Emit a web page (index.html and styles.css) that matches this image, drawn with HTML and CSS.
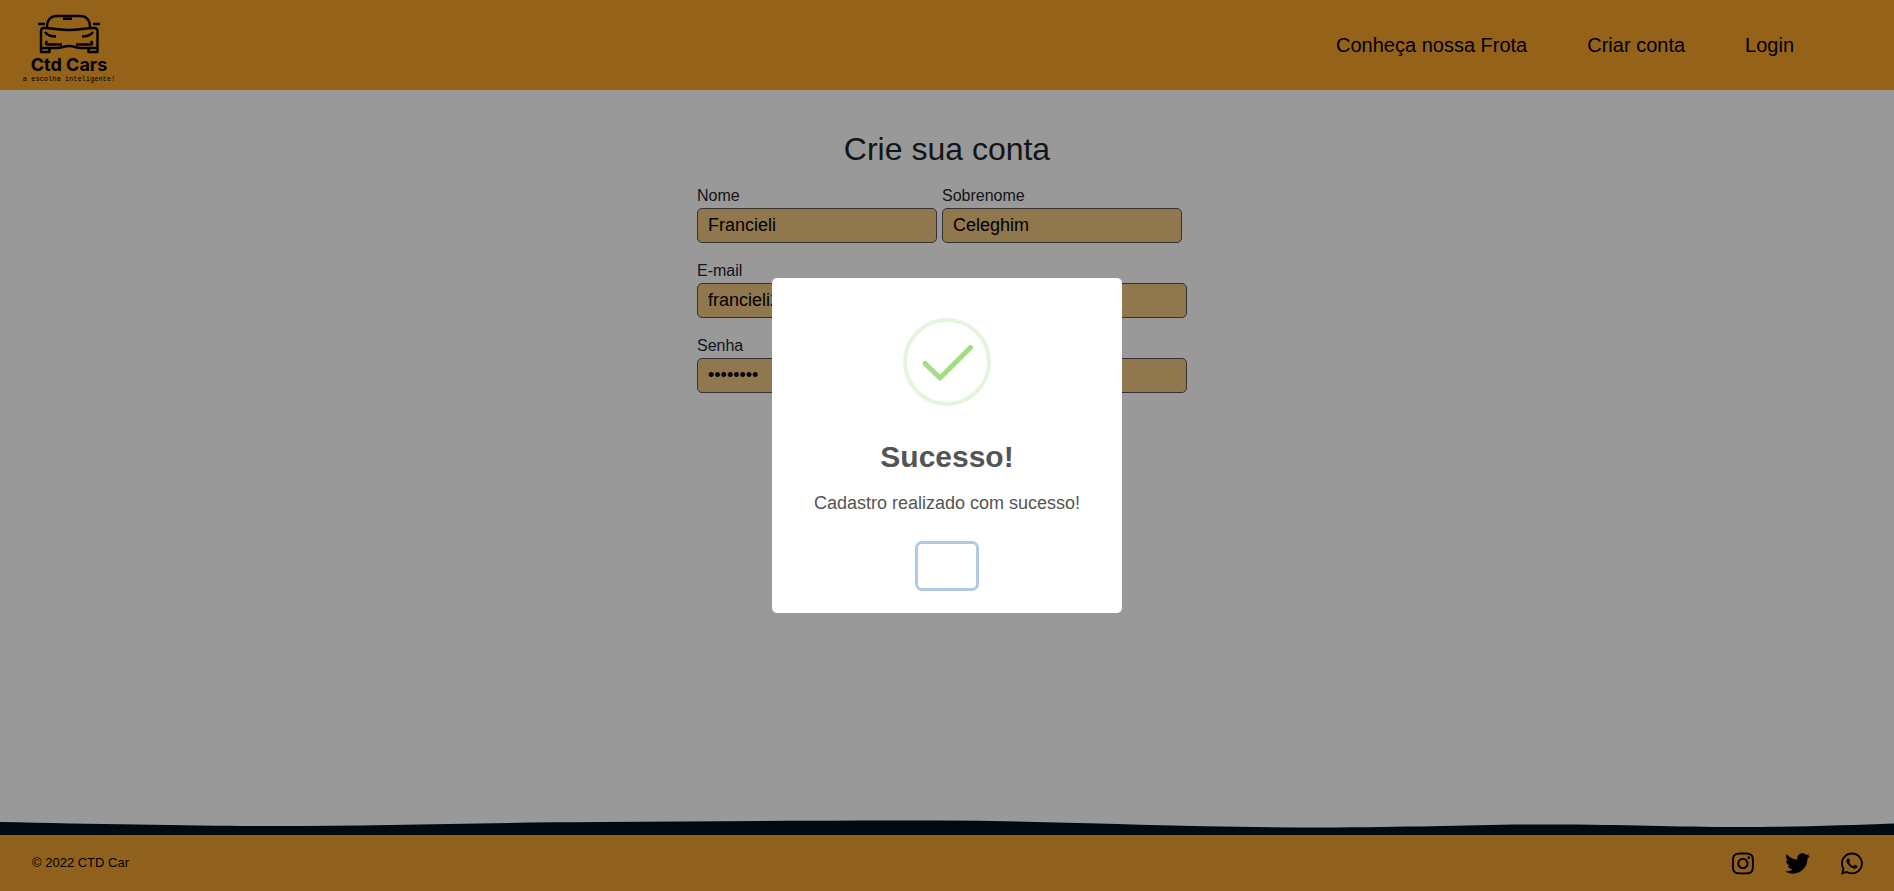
FILE: index.html
```html
<!DOCTYPE html>
<html lang="pt-BR">
<head>
<meta charset="utf-8">
<title>Ctd Cars</title>
<link rel="stylesheet" href="styles.css">
</head>
<body>
<div class="page">
  <header class="header">
    <a class="logo" href="#" aria-label="Ctd Cars">
      <svg class="logo-car" viewBox="0 0 64 40" aria-hidden="true">
        <g fill="none" stroke="#000" stroke-width="2.400" stroke-linecap="butt" stroke-linejoin="round">
          <path d="M10 13C10 6 14 2 20 2H43C49 2 53 6 53 13"/>
          <path d="M4 17C4 14.500 5 14 7 14C16 14 22 16 32 16S48 14 57 14C59 14 60.500 14.500 60.500 17V34H44C38 34 38 32 32 32S26 34 20 34H4Z"/>
          <path d="M8 18C10 21 13 22.500 19 22.500M56 18C54 21 51 22.500 45 22.500M10 27C8 30 9 30.500 11 30.500H25M54 27C56 30 55 30.500 53 30.500H39"/>
          <path d="M4 34V38H12.500V35M60.500 34V38H51.500V35"/>
          <path d="M1 10H8M56 10H63"/>
        </g>
        <path d="M26 3.500H35V6H26Z"/>
      </svg>
      <span class="logo-name">Ctd Cars</span>
      <span class="logo-tagline">a escolha inteligente!</span>
    </a>
    <nav class="nav">
      <a href="#">Conheça nossa Frota</a>
      <a href="#">Criar conta</a>
      <a href="#">Login</a>
    </nav>
  </header>
  <main class="main">
    <h1 class="title">Crie sua conta</h1>
    <form class="form">
      <div class="row">
        <div class="field"><label for="nome">Nome</label><input id="nome" type="text" value="Francieli"></div>
        <div class="field"><label for="sobrenome">Sobrenome</label><input id="sobrenome" type="text" value="Celeghim"></div>
      </div>
      <div class="field wide"><label for="email">E-mail</label><input id="email" type="text" value="francieli2"></div>
      <div class="field wide"><label for="senha">Senha</label><input id="senha" type="password" value="12345678"></div>
    </form>
  </main>
  <svg class="wave" viewBox="0 0 1894 15" preserveAspectRatio="none" aria-hidden="true">
    <path d="M0 2C100 4 200 6 270 6C380 6 480 2.500 600 2C720 1 850 .5 940 .5C1060 1 1180 7.500 1320 7.500C1420 7.500 1470 4.500 1550 4.500C1630 4.500 1670 7 1740 7C1800 7 1850 5 1894 3.500V15H0Z"/>
  </svg>
  <footer class="footer">
    <span>© 2022 CTD Car</span>
    <div class="social">
      <a href="#" aria-label="Instagram"><svg viewBox="0 0 448 512"><path d="M224.1 141c-63.6 0-114.9 51.3-114.9 114.9s51.3 114.9 114.9 114.9S339 319.500 339 255.900 287.700 141 224.100 141zm0 189.600c-41.100 0-74.700-33.500-74.700-74.700s33.500-74.700 74.700-74.700 74.700 33.500 74.700 74.700-33.600 74.700-74.700 74.700zm146.400-194.300c0 14.900-12 26.800-26.800 26.800-14.900 0-26.800-12-26.800-26.800s12-26.800 26.800-26.800 26.800 12 26.800 26.800zm76.100 27.200c-1.700-35.900-9.900-67.700-36.200-93.900-26.200-26.200-58-34.400-93.900-36.200-37-2.100-147.900-2.100-184.900 0-35.800 1.700-67.600 9.900-93.900 36.100s-34.400 58-36.200 93.900c-2.100 37-2.100 147.900 0 184.900 1.700 35.900 9.900 67.700 36.200 93.900s58 34.400 93.900 36.200c37 2.100 147.900 2.100 184.900 0 35.900-1.700 67.700-9.900 93.900-36.200 26.200-26.200 34.400-58 36.200-93.900 2.100-37 2.100-147.800 0-184.800zM398.800 388c-7.800 19.600-22.900 34.700-42.600 42.600-29.500 11.700-99.500 9-132.100 9s-102.700 2.600-132.100-9c-19.600-7.800-34.700-22.900-42.600-42.600-11.700-29.500-9-99.500-9-132.100s-2.600-102.700 9-132.100c7.800-19.600 22.900-34.700 42.600-42.600 29.500-11.700 99.500-9 132.100-9s102.700-2.600 132.100 9c19.600 7.800 34.700 22.900 42.600 42.600 11.700 29.500 9 99.500 9 132.100s2.700 102.700-9 132.100z"/></svg></a>
      <a href="#" aria-label="Twitter"><svg viewBox="0 0 512 512"><path d="M459.370 151.716c.325 4.548.325 9.097.325 13.645 0 138.720-105.583 298.558-298.558 298.558-59.452 0-114.680-17.219-161.137-47.106 8.447.974 16.568 1.299 25.340 1.299 49.055 0 94.213-16.568 130.274-44.832-46.132-.975-84.792-31.188-98.112-72.772 6.498.974 12.995 1.624 19.818 1.624 9.421 0 18.843-1.300 27.614-3.573-48.081-9.747-84.143-51.980-84.143-102.985v-1.299c13.969 7.797 30.214 12.670 47.431 13.319-28.264-18.843-46.781-51.005-46.781-87.391 0-19.492 5.197-37.360 14.294-52.954 51.655 63.675 129.300 105.258 216.365 109.807-1.624-7.797-2.599-15.918-2.599-24.040 0-57.828 46.782-104.934 104.934-104.934 30.213 0 57.502 12.670 76.670 33.137 23.715-4.548 46.456-13.320 66.599-25.340-7.798 24.366-24.366 44.833-46.132 57.827 21.117-2.273 41.584-8.122 60.426-16.243-14.292 20.791-32.161 39.308-52.628 54.253z"/></svg></a>
      <a href="#" aria-label="WhatsApp"><svg viewBox="0 0 448 512"><path d="M380.900 97.100C339 55.100 283.200 32 223.900 32c-122.400 0-222 99.600-222 222 0 39.100 10.200 77.300 29.600 111L0 480l117.700-30.900c32.400 17.700 68.900 27 106.100 27h.1c122.300 0 224.100-99.600 224.100-222 0-59.300-25.200-115-67.100-157zm-157 341.600c-33.200 0-65.700-8.900-94-25.700l-6.700-4-69.800 18.300L72 359.200l-4.400-7c-18.500-29.400-28.200-63.300-28.200-98.200 0-101.700 82.800-184.500 184.600-184.500 49.300 0 95.600 19.200 130.400 54.100 34.800 34.900 56.200 81.200 56.100 130.500 0 101.800-84.900 184.600-186.600 184.600zm101.200-138.200c-5.500-2.800-32.800-16.200-37.900-18-5.100-1.900-8.800-2.800-12.500 2.800-3.700 5.600-14.300 18-17.600 21.800-3.200 3.700-6.500 4.200-12 1.400-32.600-16.300-54-29.100-75.500-66-5.700-9.800 5.700-9.100 16.300-30.300 1.800-3.700.9-6.900-.5-9.700-1.400-2.800-12.500-30.100-17.100-41.200-4.500-10.800-9.100-9.300-12.500-9.500-3.200-.2-6.900-.2-10.600-.2-3.700 0-9.700 1.400-14.800 6.900-5.100 5.600-19.400 19-19.400 46.300 0 27.300 19.900 53.700 22.600 57.400 2.800 3.700 39.100 59.700 94.800 83.800 35.200 15.200 49 16.500 66.600 13.900 10.700-1.600 32.800-13.400 37.400-26.400 4.600-13 4.600-24.100 3.200-26.400-1.300-2.500-5-3.900-10.500-6.600z"/></svg></a>
    </div>
  </footer>
</div>
<div class="overlay">
  <div class="modal" role="dialog" aria-modal="true" aria-labelledby="modal-title">
    <svg class="check" viewBox="0 0 88 88" aria-hidden="true">
      <circle cx="44" cy="44" r="42" fill="none" stroke="#e4f5db" stroke-width="4"/>
      <path d="M22 45.500L37 60L67.500 29.500" fill="none" stroke="#a5dc86" stroke-width="5" stroke-linecap="round" stroke-linejoin="round"/>
    </svg>
    <h2 class="modal-title" id="modal-title">Sucesso!</h2>
    <p class="modal-text">Cadastro realizado com sucesso!</p>
    <button class="modal-button" type="button" aria-label="OK"></button>
  </div>
</div>
</body>
</html>
```

FILE: styles.css
```css
* { box-sizing: border-box; }
body {
  margin: 0;
  font: 16px/24px "Liberation Sans", Arial, sans-serif;
  color: #212529;
  background: #fff;
}
a { color: #000; text-decoration: none; }
.page { display: flex; flex-direction: column; min-height: 100vh; }

.header {
  display: flex;
  align-items: center;
  justify-content: space-between;
  height: 90px;
  padding: 0 100px 0 20px;
  background: #f8a32b;
}
.logo { display: flex; flex-direction: column; align-items: center; width: 98px; padding-top: 6px; }
.logo-car { width: 64px; height: 40px; }
.logo-name { font: 700 18px/22px Inter, sans-serif; }
.logo-tagline { font: 7px/6px "Liberation Mono", monospace; white-space: nowrap; }
.nav { display: flex; gap: 60px; font-size: 20px; }

.main { flex: 1; padding-top: 39px; }
.title { margin: 0 0 15px; font-size: 32px; line-height: 40px; font-weight: 400; text-align: center; }
.form { display: flex; flex-direction: column; gap: 16px; max-width: 500px; margin: 0 auto; }
.row { display: flex; gap: 5px; }
.field { display: flex; flex-direction: column; width: 240px; }
.field.wide { width: 490px; }
.field input {
  height: 35px;
  padding: 0 10px;
  border: 1px solid #555;
  border-radius: 5px;
  background: #f2c682;
  color: #000;
  font: 18px "Liberation Sans", Arial, sans-serif;
}

.wave { display: block; width: 100%; height: 15px; fill: #001121; }
.footer {
  display: flex;
  align-items: center;
  justify-content: space-between;
  height: 56px;
  padding: 0 31px 0 32px;
  background: #f0a230;
  color: #000;
  font-size: 13px;
}
.social { display: flex; gap: 31px; }
.social a { display: flex; }
.social svg { height: 25px; }

.overlay {
  position: fixed;
  inset: 0;
  display: flex;
  align-items: center;
  justify-content: center;
  background: rgba(0, 0, 0, .4);
}
.modal {
  display: flex;
  flex-direction: column;
  align-items: center;
  width: 350px;
  padding: 40px 20px 25px;
  border-radius: 5px;
  background: #fff;
  color: #545454;
}
.check { width: 88px; height: 88px; }
.modal-title { margin: 30px 0 0; font-size: 30px; line-height: 42px; }
.modal-text { margin: 12px 0 27px; font-size: 18px; line-height: 27px; }
.modal-button {
  width: 58px;
  height: 44px;
  border: 0;
  border-radius: 4px;
  background: #fff;
  box-shadow: 0 0 0 3px #b0cae4;
}
```
